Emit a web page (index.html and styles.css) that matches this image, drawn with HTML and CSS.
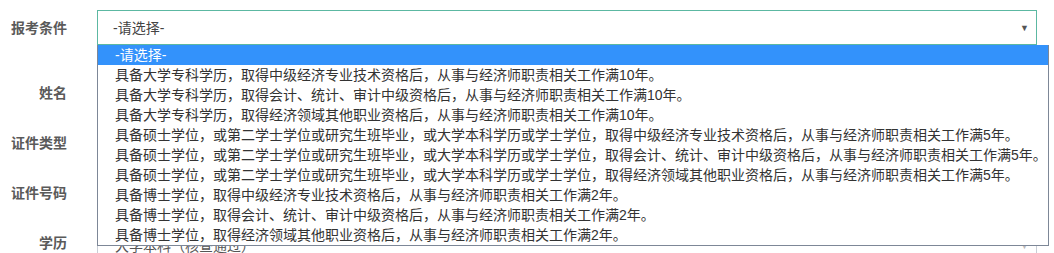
FILE: index.html
```html
<!DOCTYPE html>
<html lang="zh-CN">
<head>
<meta charset="utf-8">
<title>报考条件</title>
<link rel="stylesheet" href="styles.css">
</head>
<body>
<div class="form">
  <div class="row row-first">
    <label class="label">报考条件</label>
    <div class="select">
      <span class="select-text">-请选择-</span>
      <span class="arrow">▼</span>
    </div>
  </div>
  <div class="row row-second">
    <label class="label">姓名</label>
    <div class="input"></div>
  </div>
  <div class="row">
    <label class="label">证件类型</label>
    <div class="input"></div>
  </div>
  <div class="row">
    <label class="label">证件号码</label>
    <div class="input"></div>
  </div>
  <div class="row row-last">
    <label class="label">学历</label>
    <div class="input input-last"><span class="input-text">大学本科（核查通过）</span><span class="arrow arrow-light">▼</span></div>
  </div>

  <div class="dropdown">
    <div class="opt opt-active">-请选择-</div>
    <div class="opt">具备大学专科学历，取得中级经济专业技术资格后，从事与经济师职责相关工作满10年。</div>
    <div class="opt">具备大学专科学历，取得会计、统计、审计中级资格后，从事与经济师职责相关工作满10年。</div>
    <div class="opt">具备大学专科学历，取得经济领域其他职业资格后，从事与经济师职责相关工作满10年。</div>
    <div class="opt">具备硕士学位，或第二学士学位或研究生班毕业，或大学本科学历或学士学位，取得中级经济专业技术资格后，从事与经济师职责相关工作满5年。</div>
    <div class="opt">具备硕士学位，或第二学士学位或研究生班毕业，或大学本科学历或学士学位，取得会计、统计、审计中级资格后，从事与经济师职责相关工作满5年。</div>
    <div class="opt">具备硕士学位，或第二学士学位或研究生班毕业，或大学本科学历或学士学位，取得经济领域其他职业资格后，从事与经济师职责相关工作满5年。</div>
    <div class="opt">具备博士学位，取得中级经济专业技术资格后，从事与经济师职责相关工作满2年。</div>
    <div class="opt">具备博士学位，取得会计、统计、审计中级资格后，从事与经济师职责相关工作满2年。</div>
    <div class="opt">具备博士学位，取得经济领域其他职业资格后，从事与经济师职责相关工作满2年。</div>
  </div>
</div>
</body>
</html>
```

FILE: styles.css
```css
html, body {
  margin: 0;
  padding: 0;
  background: #ffffff;
}

body {
  font-family: "Liberation Sans", "Noto Sans CJK SC", sans-serif;
  font-size: 14px;
  color: #333333;
  overflow: hidden;
  height: 253px;
}

.form {
  position: relative;
  height: 253px;
  overflow: hidden;
  padding-top: 10px;
  box-sizing: border-box;
}

.row {
  display: grid;
  grid-template-columns: 67px 940px;
  column-gap: 30px;
  align-items: center;
  margin-bottom: 16px;
}

.row-first {
  margin-bottom: 31px;
}

.row-last {
  margin-top: 4px;
}

.label {
  text-align: right;
  font-weight: bold;
  color: #5a5a5a;
  line-height: 20px;
}

.select {
  box-sizing: border-box;
  height: 35px;
  border: 1px solid #5cb8a2;
  background: #ffffff;
  display: flex;
  align-items: center;
  justify-content: space-between;
  padding: 0 7px 0 15px;
}

.select-text {
  color: #444444;
  line-height: 20px;
}

.arrow {
  font-size: 9px;
  color: #555555;
  line-height: 10px;
}

.arrow-light {
  color: #bbbbbb;
}

.input {
  box-sizing: border-box;
  height: 34px;
  border: 1px solid #c9ced6;
  background: #ffffff;
  display: flex;
  align-items: center;
  justify-content: space-between;
  padding: 0 7px 0 17px;
}

.input-last {
  padding-top: 6px;
}

.input-text {
  color: #555555;
  line-height: 20px;
}

.dropdown {
  position: absolute;
  left: 97px;
  top: 45px;
  width: 952px;
  height: 201px;
  box-sizing: border-box;
  display: flex;
  flex-direction: column;
  background: #ffffff;
  border: 1px solid #7d8797;
  border-top: none;
}

.opt {
  flex: 0 0 20px;
  height: 20px;
  line-height: 20px;
  padding-left: 17px;
  white-space: nowrap;
  color: #333333;
}

.opt-active {
  background: #3392fb;
  color: #ffffff;
}
```
